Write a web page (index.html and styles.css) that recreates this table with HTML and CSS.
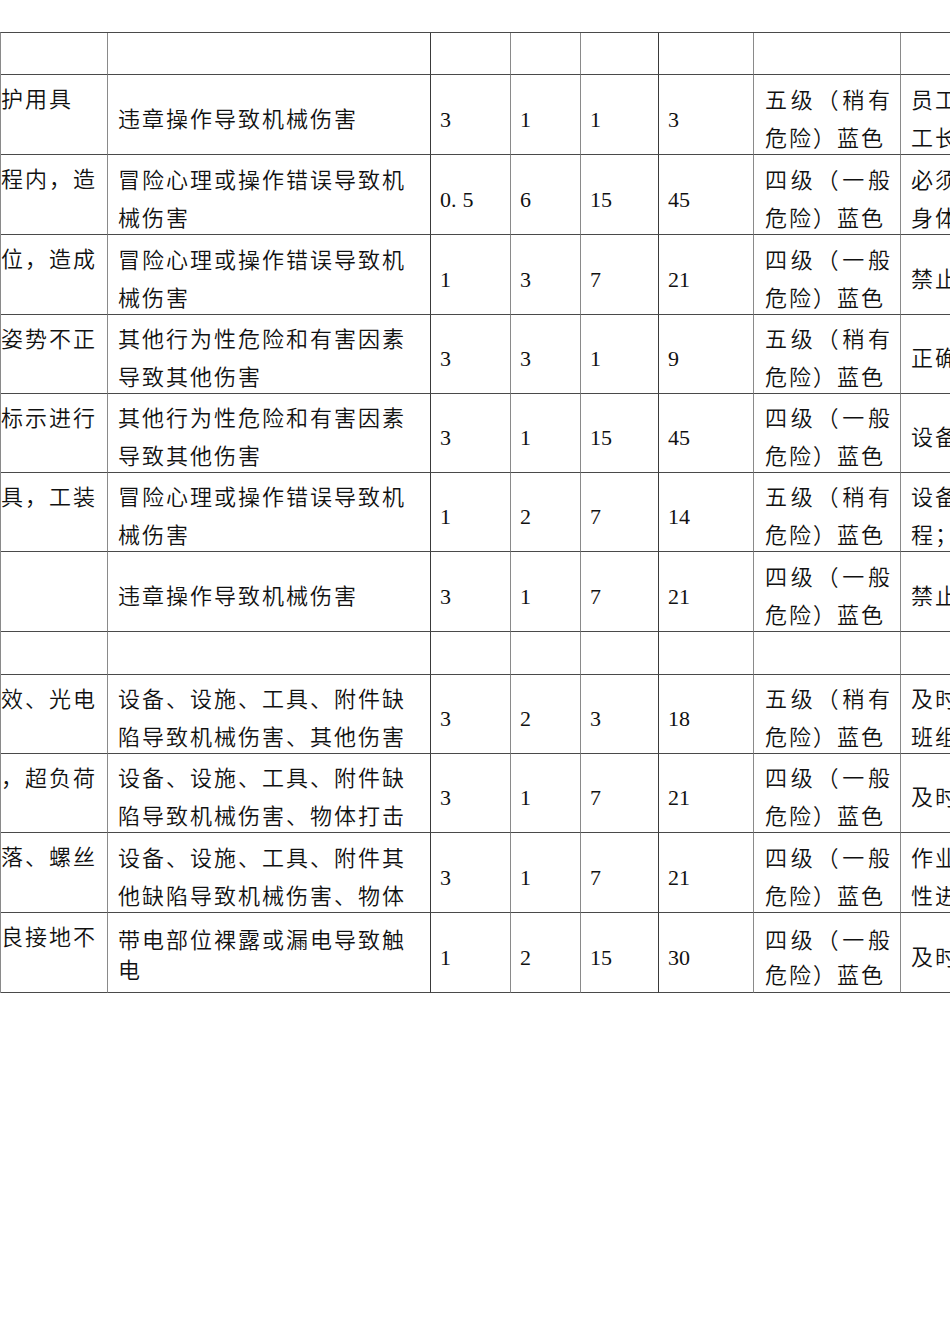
FILE: index.html
```html
<!DOCTYPE html>
<html lang="zh-CN">
<head>
<meta charset="utf-8">
<title>风险评价表</title>
<link rel="stylesheet" href="styles.css">
</head>
<body>
<div class="page">
  <table class="risk">
    <colgroup>
      <col class="c1"><col class="c2"><col class="c3"><col class="c4"><col class="c5"><col class="c6"><col class="c7"><col class="c8">
    </colgroup>
    <tbody>
      <tr class="r42"><td class="first"></td><td></td><td></td><td></td><td></td><td></td><td></td><td class="last"></td></tr>

      <tr class="r80">
        <td class="first">护用具</td>
        <td><div class="t">违章操作导致机械伤害</div></td>
        <td class="num"><div class="t">3</div></td><td class="num"><div class="t">1</div></td><td class="num"><div class="t">1</div></td><td class="num"><div class="t">3</div></td>
        <td class="lvl"><div class="t">五级（稍有危险）蓝色</div></td>
        <td class="last"><div class="t">员工必须正确佩戴劳动防护用品<br>工长监督检查</div></td>
      </tr>
      <tr class="r80">
        <td class="first">程内，造</td>
        <td><div class="t">冒险心理或操作错误导致机械伤害</div></td>
        <td class="num"><div class="t">0<span class="dot">.</span>5</div></td><td class="num"><div class="t">6</div></td><td class="num"><div class="t">15</div></td><td class="num"><div class="t">45</div></td>
        <td class="lvl"><div class="t">四级（一般危险）蓝色</div></td>
        <td class="last"><div class="t">必须停机后进行操作，严禁<br>身体进入危险区域</div></td>
      </tr>
      <tr class="r80">
        <td class="first">位，造成</td>
        <td><div class="t">冒险心理或操作错误导致机械伤害</div></td>
        <td class="num"><div class="t">1</div></td><td class="num"><div class="t">3</div></td><td class="num"><div class="t">7</div></td><td class="num"><div class="t">21</div></td>
        <td class="lvl"><div class="t">四级（一般危险）蓝色</div></td>
        <td class="last"><div class="t">禁止违章操作</div></td>
      </tr>
      <tr class="r79">
        <td class="first">姿势不正</td>
        <td><div class="t">其他行为性危险和有害因素导致其他伤害</div></td>
        <td class="num"><div class="t">3</div></td><td class="num"><div class="t">3</div></td><td class="num"><div class="t">1</div></td><td class="num"><div class="t">9</div></td>
        <td class="lvl"><div class="t">五级（稍有危险）蓝色</div></td>
        <td class="last"><div class="t">正确操作</div></td>
      </tr>
      <tr class="r79">
        <td class="first">标示进行</td>
        <td><div class="t">其他行为性危险和有害因素导致其他伤害</div></td>
        <td class="num"><div class="t">3</div></td><td class="num"><div class="t">1</div></td><td class="num"><div class="t">15</div></td><td class="num"><div class="t">45</div></td>
        <td class="lvl"><div class="t">四级（一般危险）蓝色</div></td>
        <td class="last"><div class="t">设备标识清晰</div></td>
      </tr>
      <tr class="r79">
        <td class="first">具，工装</td>
        <td><div class="t">冒险心理或操作错误导致机械伤害</div></td>
        <td class="num"><div class="t">1</div></td><td class="num"><div class="t">2</div></td><td class="num"><div class="t">7</div></td><td class="num"><div class="t">14</div></td>
        <td class="lvl"><div class="t">五级（稍有危险）蓝色</div></td>
        <td class="last"><div class="t">设备检修严格执行操作规<br>程；</div></td>
      </tr>
      <tr class="r80">
        <td class="first"></td>
        <td><div class="t">违章操作导致机械伤害</div></td>
        <td class="num"><div class="t">3</div></td><td class="num"><div class="t">1</div></td><td class="num"><div class="t">7</div></td><td class="num"><div class="t">21</div></td>
        <td class="lvl"><div class="t">四级（一般危险）蓝色</div></td>
        <td class="last"><div class="t">禁止违章操作</div></td>
      </tr>

      <tr class="r43"><td class="first"></td><td></td><td></td><td></td><td></td><td></td><td></td><td class="last"></td></tr>

      <tr class="r79">
        <td class="first">效、光电</td>
        <td><div class="t">设备、设施、工具、附件缺陷导致机械伤害、其他伤害</div></td>
        <td class="num"><div class="t">3</div></td><td class="num"><div class="t">2</div></td><td class="num"><div class="t">3</div></td><td class="num"><div class="t">18</div></td>
        <td class="lvl"><div class="t">五级（稍有危险）蓝色</div></td>
        <td class="last"><div class="t">及时维修，报告<br>班组长</div></td>
      </tr>
      <tr class="r79">
        <td class="first">，超负荷</td>
        <td><div class="t">设备、设施、工具、附件缺陷导致机械伤害、物体打击</div></td>
        <td class="num"><div class="t">3</div></td><td class="num"><div class="t">1</div></td><td class="num"><div class="t">7</div></td><td class="num"><div class="t">21</div></td>
        <td class="lvl"><div class="t">四级（一般危险）蓝色</div></td>
        <td class="last"><div class="t">及时检修</div></td>
      </tr>
      <tr class="r80">
        <td class="first">落、螺丝</td>
        <td><div class="t">设备、设施、工具、附件其他缺陷导致机械伤害、物体</div></td>
        <td class="num"><div class="t">3</div></td><td class="num"><div class="t">1</div></td><td class="num"><div class="t">7</div></td><td class="num"><div class="t">21</div></td>
        <td class="lvl"><div class="t">四级（一般危险）蓝色</div></td>
        <td class="last"><div class="t">作业前对设备进行<br>性进行检查</div></td>
      </tr>
      <tr class="r80">
        <td class="first">良接地不</td>
        <td><div class="t tight">带电部位裸露或漏电导致触电</div></td>
        <td class="num"><div class="t">1</div></td><td class="num"><div class="t">2</div></td><td class="num"><div class="t">15</div></td><td class="num"><div class="t">30</div></td>
        <td class="lvl"><div class="t mid">四级（一般危险）蓝色</div></td>
        <td class="last"><div class="t">及时检修</div></td>
      </tr>
    </tbody>
  </table>
</div>
</body>
</html>
```

FILE: styles.css
```css
html, body {
  margin: 0;
  padding: 0;
  background: #ffffff;
}

.page {
  width: 950px;
  height: 1344px;
  overflow: hidden;
  padding-top: 32px;
  box-sizing: border-box;
}

.risk {
  table-layout: fixed;
  width: 1301px;
  border-collapse: separate;
  border-spacing: 0;
  border-top: 1px solid #4a4a4a;
  border-left: 1px solid #8a8a8a;
  font-family: "Liberation Serif", "Noto Sans CJK SC", serif;
  font-size: 22px;
  font-weight: 350;
  color: #111111;
  letter-spacing: 2px;
}

.c1 { width: 107px; }
.c2 { width: 323px; }
.c3 { width: 80px; }
.c4 { width: 70px; }
.c5 { width: 78px; }
.c6 { width: 95px; }
.c7 { width: 147px; }
.c8 { width: 400px; }

.risk td {
  box-sizing: border-box;
  border-right: 1px solid #8a8a8a;
  border-bottom: 1px solid #4a4a4a;
  padding: 0 4px 0 10px;
  vertical-align: middle;
  line-height: 38px;
  overflow: hidden;
}

.risk td:nth-child(2),
.risk td:nth-child(5) {
  border-right-color: #3a3a3a;
}

.risk td.first {
  vertical-align: top;
  padding: 6px 0 0 0;
  white-space: nowrap;
}

.risk td.num {
  letter-spacing: 0;
  padding-left: 9px;
}

.dot {
  letter-spacing: 6px;
}

.risk td.lvl {
  text-align: justify;
  padding: 0 8px 0 11px;
}

.risk td.last {
  white-space: nowrap;
  padding-left: 10px;
}

.t {
  margin: 5px 0 -5px;
}

.t.tight {
  line-height: 30px;
  margin: 3px 0 -3px;
}

.t.mid {
  line-height: 35px;
}

.r42 { height: 42px; }
.r43 { height: 43px; }
.r79 { height: 79px; }
.r80 { height: 80px; }
```
